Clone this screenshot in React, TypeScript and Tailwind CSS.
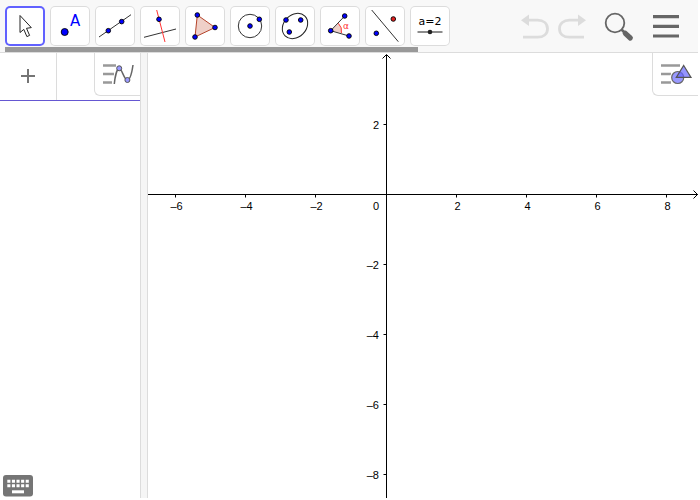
import { useState } from "react"
import type { ReactNode } from "react"
import clsx from "clsx"

// Blue construction point used by most of the tool icons
function Point({ x, y, r = 2.3, fill = "#0000ff" }: { x: number; y: number; r?: number; fill?: string }) {
  return <circle cx={x} cy={y} r={r} fill={fill} stroke="#000" strokeWidth="0.9" />
}

const tools: { name: string; icon: ReactNode }[] = [
  {
    name: "Move",
    icon: <path d="M15 9.5V26.5L18.8 23.4L21.9 30.6L24.6 29.4L21.5 22.3L26.3 21.6Z" fill="#fff" stroke="#222" strokeWidth="1" />,
  },
  {
    name: "Point",
    icon: (
      <>
        <Point x={14.7} y={26} r={3.5} />
        <text x="20" y="20" className="font-['DejaVu_Sans'] text-[15px]" fill="#0000ff">A</text>
      </>
    ),
  },
  {
    name: "Line",
    icon: (
      <>
        <path d="M4 31L36 8.7" stroke="#333" />
        <Point x={13.3} y={24.7} />
        <Point x={26.7} y={15.6} />
      </>
    ),
  },
  {
    name: "Perpendicular Line",
    icon: (
      <>
        <path d="M4 31.3L36 23" stroke="#333" />
        <path d="M16.7 4L25 36" stroke="#ff3333" />
        <Point x={19} y={13.3} />
      </>
    ),
  },
  {
    name: "Polygon",
    icon: (
      <>
        <path d="M12.3 9L30 21.5L10 31Z" fill="#efd0c8" stroke="#b5442a" />
        <Point x={12.3} y={9} />
        <Point x={30} y={21.5} />
        <Point x={10} y={31} />
      </>
    ),
  },
  {
    name: "Circle with Center through Point",
    icon: (
      <>
        <circle cx="20" cy="20" r="11.7" fill="none" stroke="#333" />
        <Point x={20} y={20} />
        <Point x={29.3} y={13.3} />
      </>
    ),
  },
  {
    name: "Ellipse",
    icon: (
      <>
        <ellipse cx="20" cy="20" rx="14" ry="11.2" transform="rotate(-45 20 20)" fill="none" stroke="#222" />
        <Point x={11} y={14} />
        <Point x={25.7} y={14} />
        <Point x={14.3} y={26} />
      </>
    ),
  },
  {
    name: "Angle",
    icon: (
      <>
        <path d="M10.7 24.7L18.3 17.3A10.8 10.8 0 0 1 21.4 27Z" fill="#efd0c8" />
        <path d="M18.3 17.3A10.8 10.8 0 0 1 21.4 27" fill="none" stroke="#ff3333" />
        <path d="M24.7 10L10.7 24.7L29 30" fill="none" stroke="#333" />
        <Point x={10.7} y={24.7} />
        <Point x={24.7} y={10} />
        <Point x={29} y={30} />
        <text x="23" y="23" className="font-['DejaVu_Sans'] text-[9px]" fill="#ff3333">α</text>
      </>
    ),
  },
  {
    name: "Reflect about Line",
    icon: (
      <>
        <path d="M6.7 4L33.3 35.7" stroke="#333" />
        <Point x={28.3} y={13} fill="#e02020" />
        <Point x={11.3} y={27.3} />
      </>
    ),
  },
  {
    name: "Slider",
    icon: (
      <>
        <text x="20" y="19" textAnchor="middle" className="font-['DejaVu_Sans'] text-[11px]" fill="#000">a=2</text>
        <path d="M7.5 26H32.5" stroke="#666" strokeWidth="1.5" />
        <circle cx="20" cy="26" r="2.3" fill="#222" />
      </>
    ),
  },
]

function Toolbar() {
  const [selected, setSelected] = useState("Move")

  return (
    <div className="pl-[5px] pt-1.5">
      <div className="flex gap-[5px]">
        {tools.map((tool) => (
          <button
            key={tool.name}
            aria-label={tool.name}
            onClick={() => setSelected(tool.name)}
            className={clsx(
              "size-10 shrink-0 rounded-[5px] bg-white ring-inset",
              selected === tool.name ? "ring-2 ring-[#6161ff]" : "ring-1 ring-[#dcdcdc]"
            )}
          >
            <svg viewBox="0 0 40 40" className="size-10">{tool.icon}</svg>
          </button>
        ))}
      </div>
      {/* Scroll thumb */}
      <div className="mt-px h-[5px] w-[413px] bg-[#999999]"></div>
    </div>
  )
}

function HeaderActions() {
  return (
    <div className="flex items-center pr-4">
      <button aria-label="Undo" className="mr-[5px] size-8">
        <svg viewBox="0 0 32 32" className="size-8" fill="none">
          <path d="M9 10.2H18.5C24.5 10.2 28.5 13.5 28.5 18.7C28.5 24 24.5 27.2 18.5 27.2H4" stroke="#dcdcdc" strokeWidth="2.8" />
          <path d="M2 10.2L10 4.5V16Z" fill="#dcdcdc" />
        </svg>
      </button>
      <button aria-label="Redo" className="mr-[15px] size-8">
        <svg viewBox="0 0 32 32" className="size-8" fill="none">
          <path d="M23 10.2H13.5C7.5 10.2 3.5 13.5 3.5 18.7C3.5 24 7.5 27.2 13.5 27.2H28" stroke="#dcdcdc" strokeWidth="2.8" />
          <path d="M30 10.2L22 4.5V16Z" fill="#dcdcdc" />
        </svg>
      </button>
      <button aria-label="Search" className="mr-[15px] size-8">
        <svg viewBox="0 0 32 32" className="size-8" fill="none" stroke="#666">
          <circle cx="12" cy="13" r="9.3" strokeWidth="1.8" />
          <path d="M18.5 19.5L22 23" strokeWidth="2.6" />
          <path d="M22.3 23.3L27.3 28" strokeWidth="5.2" strokeLinecap="round" />
        </svg>
      </button>
      <button aria-label="Menu" className="size-8">
        <svg viewBox="0 0 32 32" className="size-8">
          <path d="M3 6.6H29M3 16.4H29M3 26H29" stroke="#666" strokeWidth="3.2" />
        </svg>
      </button>
    </div>
  )
}

function AlgebraView() {
  return (
    <aside className="flex w-[140px] shrink-0 flex-col bg-white">
      <div className="flex h-12 border-b border-[#6557d2]">
        <button aria-label="Add item" className="flex w-[57px] shrink-0 items-center justify-center border-r border-[#dcdcdc] pb-px">
          <svg viewBox="0 0 14 14" className="size-3.5">
            <path d="M7 0V14M0 7H14" stroke="#757575" strokeWidth="2" />
          </svg>
        </button>
        <input aria-label="Algebra input" className="min-w-0 flex-1 outline-none" />
        <button aria-label="Algebra style bar" className="h-[43px] w-[46px] shrink-0 rounded-bl-md border-b border-l border-[#dcdcdc]">
          <svg viewBox="1 0 45 42" className="h-[42px] w-[45px]" fill="none">
            <path d="M9 12.5H22M9 21H20M9 29.5H18" stroke="#999" strokeWidth="2.6" />
            <path d="M20.3 31C21 24 23 15.5 25.2 15.5C28 15.5 30 27 33.3 27C36 27 38 19 39 12" stroke="#666" strokeWidth="1.5" />
            <circle cx="25.2" cy="15.3" r="2.5" fill="#9999ff" stroke="#555" />
            <circle cx="33.4" cy="27" r="2.5" fill="#9999ff" stroke="#555" />
          </svg>
        </button>
      </div>
      <div className="flex-1"></div>
      <button aria-label="Show keyboard" className="mb-px ml-[3px] w-[30px]">
        <svg viewBox="0 0 30 22" className="h-[22px] w-[30px]">
          <rect width="30" height="21.5" rx="3" fill="#757575" />
          <path d="M4.3 6.3H26M4.3 10.8H26" stroke="#fff" strokeWidth="3" strokeDasharray="3.1 1.5" />
          <path d="M9 16.8H21" stroke="#fff" strokeWidth="3" />
        </svg>
      </button>
    </aside>
  )
}

const xTicks = [-6, -4, -2, 2, 4, 6, 8]
const yTicks = [2, -2, -4, -6, -8]
const axisX = 238.5
const axisY = 141.5
const unit = 35

const formatTick = (n: number) => (n < 0 ? `–${-n}` : `${n}`)

// Tick position on the x axis, kept on whole device pixels
const tickX = (n: number) => axisX + n * unit + (n < 0 ? -1 : 0)

function GraphicsView() {
  return (
    <main className="relative min-w-0 flex-1 bg-white">
      <svg className="block h-full w-full overflow-hidden font-['Liberation_Sans',sans-serif] text-[11px]" fill="none" stroke="#000">
        <line x1="0" y1={axisY} x2="100%" y2={axisY} />
        <line x1={axisX} y1="2" x2={axisX} y2="100%" />
        <path d="M234.5 5.5L238.5 1.5L242.5 5.5" />
        <svg x="100%" y={axisY} overflow="visible">
          <path d="M-4.5 -4L-0.5 0L-4.5 4" />
        </svg>
        {xTicks.map((n) => (
          <g key={n}>
            <line x1={tickX(n)} y1={axisY} x2={tickX(n)} y2={axisY + 3} />
            <text x={tickX(n) + 1} y="157" textAnchor="middle" fill="#000" stroke="none">
              {formatTick(n)}
            </text>
          </g>
        ))}
        {yTicks.map((n) => (
          <g key={n}>
            <line x1={axisX - 3} y1={axisY - n * unit} x2={axisX} y2={axisY - n * unit} />
            <text x="231" y={axisY + 4.5 - n * unit} textAnchor="end" fill="#000" stroke="none">
              {formatTick(n)}
            </text>
          </g>
        ))}
        <text x="231" y="157" textAnchor="end" fill="#000" stroke="none">0</text>
      </svg>
      <button aria-label="Graphics style bar" className="absolute right-0 top-0 h-[43px] w-[46px] rounded-bl-md border-b border-l border-[#dcdcdc] bg-white">
        <svg viewBox="1 0 45 42" className="h-[42px] w-[45px]">
          <path d="M9 12.5H28M9 21H19M9 29.5H19" stroke="#999" strokeWidth="2.6" />
          <circle cx="25.7" cy="24.5" r="7.5" fill="#fff" />
          <circle cx="25.7" cy="24.5" r="6" fill="#9999ff" stroke="#666" strokeWidth="1.2" />
          <path d="M31.7 12.5L39 24.4H24.3Z" fill="#6666ff" fillOpacity="0.7" stroke="#555" strokeWidth="1.2" />
        </svg>
      </button>
    </main>
  )
}

function App() {
  return (
    <div className="flex h-screen flex-col bg-white pb-0.5 pr-0.5">
      <header className="flex shrink-0 justify-between border-b border-[#dcdcdc] bg-[#f8f8f8]">
        <Toolbar />
        <HeaderActions />
      </header>
      <div className="flex min-h-0 flex-1">
        <AlgebraView />
        {/* Splitter */}
        <div className="w-2 shrink-0 border-x border-[#dcdcdc] bg-[#f5f5f5]"></div>
        <GraphicsView />
      </div>
    </div>
  )
}

export default App
